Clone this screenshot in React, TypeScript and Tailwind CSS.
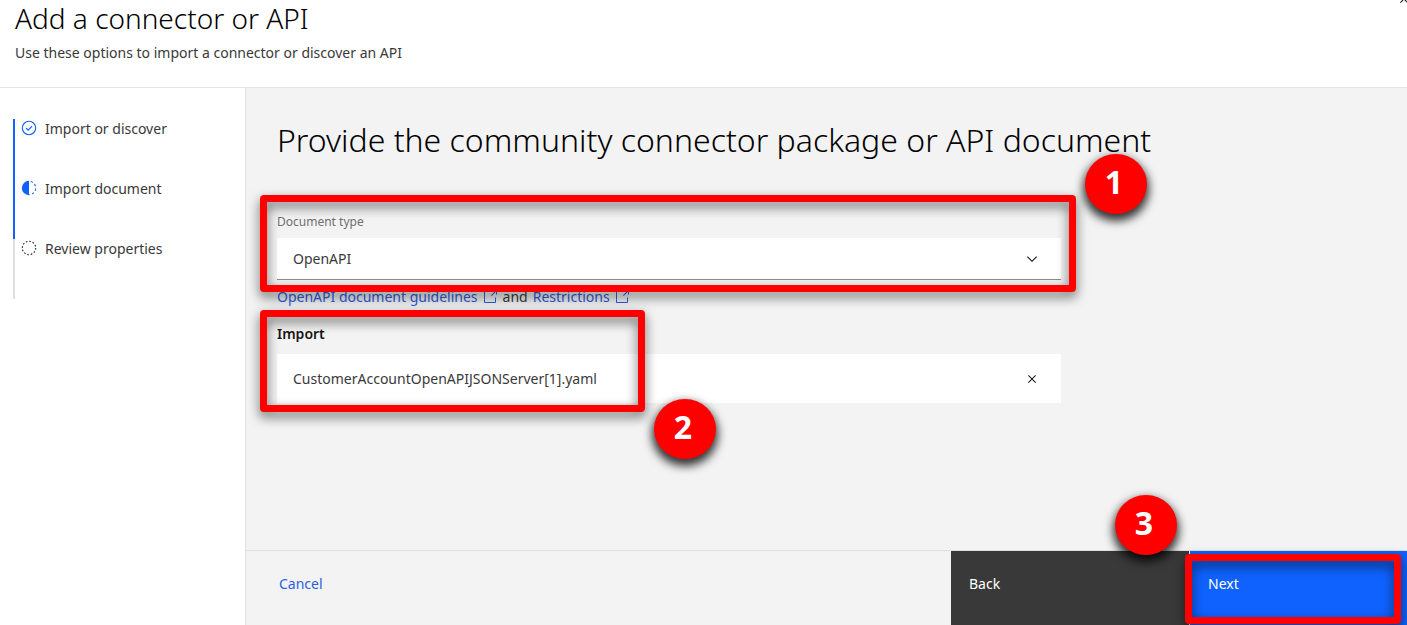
import React from "react";

const boxClass =
  "pointer-events-none absolute z-10 rounded-[4px] border-[7px] border-[#ff0000] drop-shadow-[0_5px_6px_rgba(0,0,0,0.6)]";
const badgeClass =
  "pointer-events-none absolute z-20 flex h-[60px] w-[62px] items-center justify-center rounded-[50%] bg-[#ff0000] pb-1 pr-1 font-['Noto_Sans',sans-serif] text-[32px] leading-none font-bold text-white shadow-[0_5px_10px_2px_rgba(0,0,0,0.8)]";

function CloseIcon() {
  return (
    <svg viewBox="0 0 32 32" className="size-4" fill="currentColor" aria-hidden="true">
      <path d="M24 9.4 22.6 8 16 14.6 9.4 8 8 9.4l6.6 6.6L8 22.6 9.4 24l6.6-6.6 6.6 6.6 1.4-1.4-6.6-6.6z" />
    </svg>
  );
}

function LaunchIcon() {
  return (
    <svg viewBox="0 0 32 32" className="size-4 shrink-0" fill="currentColor" aria-hidden="true">
      <path d="M26 28H6a2 2 0 0 1-2-2V6a2 2 0 0 1 2-2h9v2H6v20h20v-9h2v9a2 2 0 0 1-2 2z" />
      <path d="M21 2v2h5.6L18 12.6l1.4 1.4L28 5.4V11h2V2z" />
    </svg>
  );
}

function StepIcon({ state }: { state: string }) {
  if (state === "complete") {
    return (
      <svg viewBox="0 0 16 16" className="size-4 text-[#0f62fe]" fill="none" stroke="currentColor" aria-hidden="true">
        <circle cx="8" cy="8" r="6.7" strokeWidth="1.1" />
        <path d="m5 8.1 2.1 2.1 4-4" strokeWidth="1.2" />
      </svg>
    );
  }
  if (state === "current") {
    return (
      <svg viewBox="0 0 16 16" className="size-4 text-[#0f62fe]" aria-hidden="true">
        <path d="M8 .8a7.2 7.2 0 0 0 0 14.4z" fill="currentColor" />
        <path d="M8 1.3a6.7 6.7 0 0 1 0 13.4" fill="none" stroke="currentColor" strokeWidth="1.1" strokeDasharray="2.2 2.4" strokeDashoffset="-1.8" />
      </svg>
    );
  }
  return (
    <svg viewBox="0 0 16 16" className="size-4 text-[#262626]" fill="none" stroke="currentColor" aria-hidden="true">
      <circle cx="8" cy="8" r="6.7" strokeWidth="1.1" strokeDasharray="1.7 1.808" />
    </svg>
  );
}

const steps = [
  { label: "Import or discover", state: "complete" },
  { label: "Import document", state: "current" },
  { label: "Review properties", state: "upcoming" },
];

export default function App() {
  return (
    <div className="flex min-h-screen flex-col overflow-hidden bg-white font-['Noto_Sans',sans-serif] text-sm text-[#393939]">
      <header className="relative h-[88px] border-b border-[#e5e5e5] px-[15px]">
        <h1 className="text-[28px] leading-9 font-light text-black">Add a connector or API</h1>
        <p className="mt-2 leading-[18px]">Use these options to import a connector or discover an API</p>
        <button type="button" aria-label="Close" className="absolute -top-[9px] -right-[5px] text-[#161616]">
          <CloseIcon />
        </button>
      </header>

      <div className="flex flex-1">
        <nav aria-label="Progress" className="w-[246px] shrink-0 border-r border-[#e0e0e0] pt-[31px] pl-[13px]">
          <ol>
            {steps.map((s) => (
              <li
                key={s.label}
                aria-current={s.state === "current" ? "step" : undefined}
                className={
                  s.state === "upcoming"
                    ? "flex h-[60px] gap-2 border-l-2 border-[#e0e0e0] pl-1.5"
                    : "flex h-[60px] gap-2 border-l-2 border-[#0f62fe] pl-1.5"
                }
              >
                <span className="pt-px">
                  <StepIcon state={s.state} />
                </span>
                <span className="leading-5">{s.label}</span>
              </li>
            ))}
          </ol>
        </nav>

        <main className="flex min-w-0 flex-1 flex-col bg-[#f3f3f3]">
          <div className="flex-1 pt-7 pl-[31px]">
            <h2 className="text-[32px] leading-12 font-light whitespace-nowrap text-black">
              Provide the community connector package or API document
            </h2>

            <form className="mt-[50px] mr-[346px]">
              <div className="relative">
                <label htmlFor="doc-type" className="block text-xs leading-4 text-[#6f6f6f]">
                  Document type
                </label>
                <div className="relative mt-2">
                  <select
                    id="doc-type"
                    className="h-[42px] w-full appearance-none border-b border-[#8d8d8d] bg-white px-4 text-[#393939]"
                  >
                    <option>OpenAPI</option>
                  </select>
                  <svg viewBox="0 0 16 16" className="pointer-events-none absolute top-[13px] right-[21px] size-4" fill="#161616" aria-hidden="true">
                    <path d="M8 11 3 6l.7-.7L8 9.6l4.3-4.3.7.7z" />
                  </svg>
                </div>
                <div className={`${boxClass} -top-[19px] -right-[15px] -bottom-3 -left-[17px]`} />
                <span className={`${badgeClass} -top-[60px] -right-[86px]`}>1</span>
              </div>

              <p className="mt-[7px] flex items-center gap-[5px] leading-5">
                <a href="#guidelines" className="flex items-center gap-1 text-[#2b5fe3]">
                  OpenAPI document guidelines <LaunchIcon />
                </a>
                <span>and</span>
                <a href="#restrictions" className="flex items-center gap-1 text-[#2b5fe3]">
                  Restrictions <LaunchIcon />
                </a>
              </p>

              <div className="relative mt-[17px]">
                <h3 className="leading-5 font-semibold text-[#161616]">Import</h3>
                <div className="mt-2.5 flex h-[49px] items-center justify-between bg-white pr-[21px] pl-4">
                  <span>CustomerAccountOpenAPIJSONServer[1].yaml</span>
                  <button type="button" aria-label="Remove file" className="text-[#161616]">
                    <CloseIcon />
                  </button>
                </div>
                <div className={`${boxClass} -top-[14px] -bottom-[9px] -left-[17px] w-[385px]`} />
                <span className={`${badgeClass} -bottom-14 left-[377px]`}>2</span>
              </div>
            </form>
          </div>

          <footer className="flex h-[75px] border-t border-[#e0e0e0]">
            <div className="flex flex-1 pt-[22px] pl-[33px]">
              <button type="button" className="h-[22px] text-[#2b5fe3]">
                Cancel
              </button>
            </div>
            <div className="relative flex w-[456px] gap-px">
              <button type="button" className="w-[238px] bg-[#393939] px-[18px] pb-2 text-left text-white">
                Back
              </button>
              <button type="button" className="flex-1 bg-[#0f62fe] px-[18px] pb-2 text-left text-white">
                Next
              </button>
              <div className={`${boxClass} top-[3px] right-1.5 bottom-px left-[234px]`} />
              <span className={`${badgeClass} -top-14 left-[164px]`}>3</span>
            </div>
          </footer>
        </main>
      </div>
    </div>
  );
}
